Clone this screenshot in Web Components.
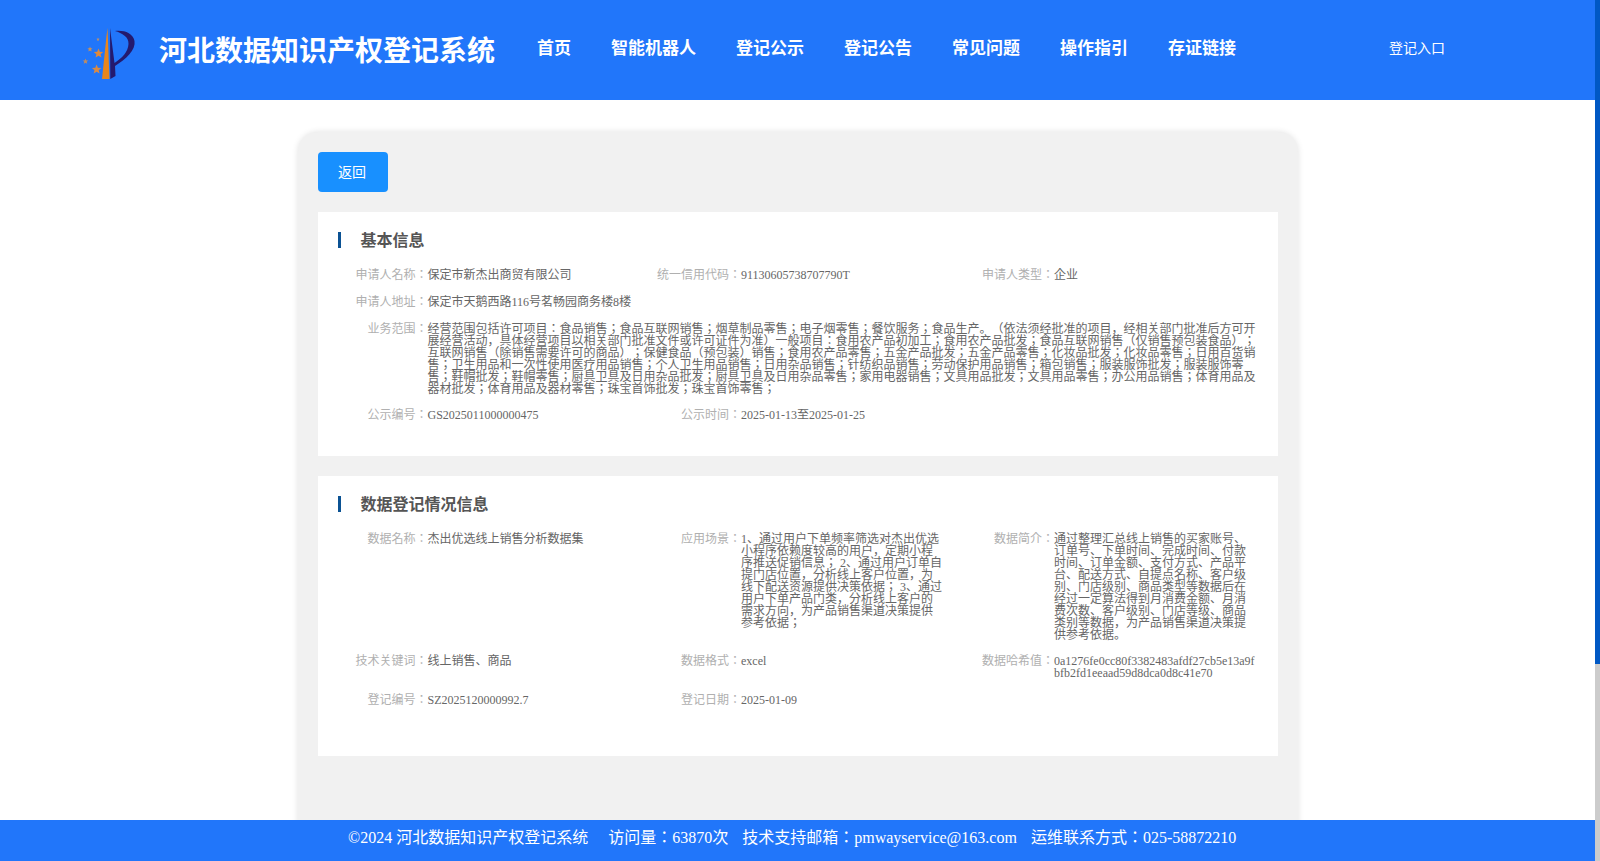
<!DOCTYPE html>
<html><head><meta charset="utf-8"><title>河北数据知识产权登记系统</title>
<style>
html,body{margin:0;padding:0;height:100%;overflow:hidden;background:#fff}
body{font-family:"Liberation Serif","Noto Sans CJK JP",serif;text-spacing-trim:space-all}
</style></head><body>
<app-shell>
  <app-header title-text="河北数据知识产权登记系统">
    <nav-link>首页</nav-link><nav-link>智能机器人</nav-link><nav-link>登记公示</nav-link><nav-link>登记公告</nav-link><nav-link>常见问题</nav-link><nav-link>操作指引</nav-link><nav-link>存证链接</nav-link>
  </app-header>
  <detail-card>
    <back-button>返回</back-button>
    <info-section heading="基本信息" pad="35">
      <info-row><info-item label="申请人名称">保定市新杰出商贸有限公司</info-item><info-item label="统一信用代码">91130605738707790T</info-item><info-item label="申请人类型">企业</info-item></info-row>
      <info-row><info-item label="申请人地址" wide>保定市天鹅西路116号茗畅园商务楼8楼</info-item></info-row>
      <info-row tight><info-item label="业务范围" wide>经营范围包括许可项目：食品销售；食品互联网销售；烟草制品零售；电子烟零售；餐饮服务；食品生产。（依法须经批准的项目，经相关部门批准后方可开展经营活动，具体经营项目以相关部门批准文件或许可证件为准）一般项目：食用农产品初加工；食用农产品批发；食品互联网销售（仅销售预包装食品）；互联网销售（除销售需要许可的商品）；保健食品（预包装）销售；食用农产品零售；五金产品批发；五金产品零售；化妆品批发；化妆品零售；日用百货销售；卫生用品和一次性使用医疗用品销售；个人卫生用品销售；日用杂品销售；针纺织品销售；劳动保护用品销售；箱包销售；服装服饰批发；服装服饰零售；鞋帽批发；鞋帽零售；厨具卫具及日用杂品批发；厨具卫具及日用杂品零售；家用电器销售；文具用品批发；文具用品零售；办公用品销售；体育用品及器材批发；体育用品及器材零售；珠宝首饰批发；珠宝首饰零售；</info-item></info-row>
      <info-row><info-item label="公示编号">GS2025011000000475</info-item><info-item label="公示时间">2025-01-13至2025-01-25</info-item></info-row>
    </info-section>
    <info-section heading="数据登记情况信息" pad="50">
      <info-row tight><info-item label="数据名称">杰出优选线上销售分析数据集</info-item><info-item label="应用场景">1、通过用户下单频率筛选对杰出优选小程序依赖度较高的用户，定期小程序推送促销信息； 2、通过用户订单自提门店位置，分析线上客户位置，为线下配送资源提供决策依据； 3、通过用户下单产品门类，分析线上客户的需求方向，为产品销售渠道决策提供参考依据；</info-item><info-item label="数据简介">通过整理汇总线上销售的买家账号、订单号、下单时间、完成时间、付款时间、订单金额、支付方式、产品平台、配送方式、自提点名称、客户级别、门店级别、商品类型等数据后在经过一定算法得到月消费金额、月消费次数、客户级别、门店等级、商品类别等数据，为产品销售渠道决策提供参考依据。</info-item></info-row>
      <info-row><info-item label="技术关键词">线上销售、商品</info-item><info-item label="数据格式">excel</info-item><info-item label="数据哈希值">0a1276fe0cc80f3382483afdf27cb5e13a9fbfb2fd1eeaad59d8dca0d8c41e70</info-item></info-row>
      <info-row><info-item label="登记编号">SZ2025120000992.7</info-item><info-item label="登记日期">2025-01-09</info-item></info-row>
    </info-section>
  </detail-card>
  <app-footer></app-footer>
</app-shell>
<script>
function def(name, css, html, init){
  customElements.define(name, class extends HTMLElement{
    connectedCallback(){
      if(this.shadowRoot) return;
      const r=this.attachShadow({mode:'open'});
      r.innerHTML='<style>'+css+'</style>'+(typeof html==='function'?html(this):html);
      if(init) init(this,r);
    }
  });
}
def('app-shell',
 ':host{display:flex;width:1600px;height:861px;overflow:hidden;font-family:"Liberation Serif","Noto Sans CJK JP",serif}.col{width:1595px;height:861px;display:flex;flex-direction:column;overflow:hidden}.track{width:5px;height:861px;background:#ccc;flex:none}.thumb{height:664px;background:#0058c4}',
 '<div class="col"><slot></slot></div><div class="track"><div class="thumb"></div></div>');
def('app-header',
 ':host{display:flex;flex:none;height:100px;background:#2176fa;color:#fff;align-items:center;box-sizing:border-box;padding-left:70px}svg{width:70px;height:75px;flex:none;margin-right:19px;margin-top:5px}h1{margin:0;font:700 28px/32px "Noto Sans CJK SC",sans-serif;white-space:nowrap;width:378px;flex:none;margin-top:-3px}nav{display:flex;gap:40px;margin-top:-6px}.login{margin-left:153px;font:400 14px/20px "Noto Sans CJK SC",sans-serif;margin-top:-6px;white-space:nowrap}',
 h=>`<svg viewBox="70 15 70 75" aria-hidden="true">
   <path d="M102 79 L106.5 36 L107.5 28 L109.5 79 Z" fill="#e8861c"/>
   <path d="M110 28 L110.3 79 L115.5 76 L115 66 C126 59 136 50 134.5 41 C133 33 124 30 115 31 C122 33 129 37 128.5 44 C128 52 122 58 114.5 63 Z" fill="#241a6e"/>
   <path d="M98.5 48.6l1.3 3.2 3.4.2-2.6 2.2.9 3.3-3-1.8-2.9 1.9.8-3.4-2.6-2.2 3.4-.2z" fill="#e0893a"/>
   <path d="M96.6 64.6l1.3 3.2 3.4.2-2.6 2.2.9 3.3-3-1.8-2.9 1.9.8-3.4-2.6-2.2 3.4-.2z" fill="#d98a45"/>
   <path d="M90 46.5l.7 1.8 1.9.1-1.5 1.2.5 1.9-1.6-1-1.6 1 .4-1.9-1.4-1.2 1.9-.1z" fill="#c9905a"/>
   <path d="M85.5 58.5l.8 1.9 2 .1-1.6 1.3.5 2-1.7-1.1-1.7 1.1.5-2-1.6-1.3 2-.1z" fill="#c08c60"/>
   <path d="M98 37.5l.5 1.2 1.3.1-1 .8.3 1.3-1.1-.7-1.1.7.3-1.3-1-.8 1.3-.1z" fill="#b98f70"/>
 </svg><h1>${h.getAttribute('title-text')}</h1><nav><slot></slot></nav><div class="login">登记入口</div>`);
def('nav-link',':host{display:block;font:700 17px/24px "Noto Sans CJK SC",sans-serif;color:#fff;white-space:nowrap}','<slot></slot>');
def('detail-card',
 ':host{display:flex;flex-direction:column;gap:20px;flex:none;box-sizing:border-box;width:1000px;height:760px;margin:32px 0 0 298px;padding:20px;background:#f1f1f1;border-radius:20px;box-shadow:0 0 6px rgba(0,0,0,.12)}',
 '<slot></slot>');
def('back-button',
 ':host{display:flex;align-items:center;justify-content:center;flex:none;width:70px;height:40px;background:#1890ff;color:#fff;border-radius:4px;font:400 14px/20px "Noto Sans CJK JP",sans-serif;box-sizing:border-box;padding:0 2px 2px 0}',
 '<slot></slot>');
def('info-section',
 ':host{display:flex;flex-direction:column;gap:15px;flex:none;background:#fff;padding:20px 0 0}h2{margin:0 0 6px 20px;display:flex;align-items:center;gap:19.5px;font:700 16px/16px "Noto Sans CJK SC",sans-serif;color:#555}h2 i{width:3px;height:16px;background:#0b5293;flex:none}h2 span{position:relative;top:-1px}',
 h=>`<h2><i></i><span>${h.getAttribute('heading')}</span></h2><slot></slot>`,
 h=>{h.style.paddingBottom=h.getAttribute('pad')+'px'});
def('info-row',
 ':host{display:grid;grid-template-columns:109.5px 229.5px 84px 202px 111px 202px;font-size:12px;line-height:12px;align-items:start}:host([tight]){margin-bottom:-1px}',
 '<slot></slot>');
def('info-item',
 ':host{display:contents}.l{color:#b0b0b0;text-align:right;white-space:nowrap;grid-column:span 1}.v{color:#666;word-break:break-all}:host([wide]) .v{grid-column:span 5}',
 h=>`<div class="l">${h.getAttribute('label')}：</div><div class="v"><slot></slot></div>`);
def('app-footer',
 ':host{display:flex;flex:none;position:absolute;left:0;top:820px;width:1595px;height:41px;background:#2176fa;color:#fff;font-size:16px;line-height:20px;padding-top:8px;padding-left:348px;box-sizing:border-box;white-space:nowrap;font-family:"Liberation Serif","Noto Sans CJK JP",serif}span{display:block}.a{margin-right:20px}.b{margin-right:14px}.c{margin-right:14px}',
 '<span class="a">©2024 河北数据知识产权登记系统</span><span class="b">访问量：63870次</span><span class="c">技术支持邮箱：pmwayservice@163.com</span><span>运维联系方式：025-58872210</span>');
</script>
</body></html>
